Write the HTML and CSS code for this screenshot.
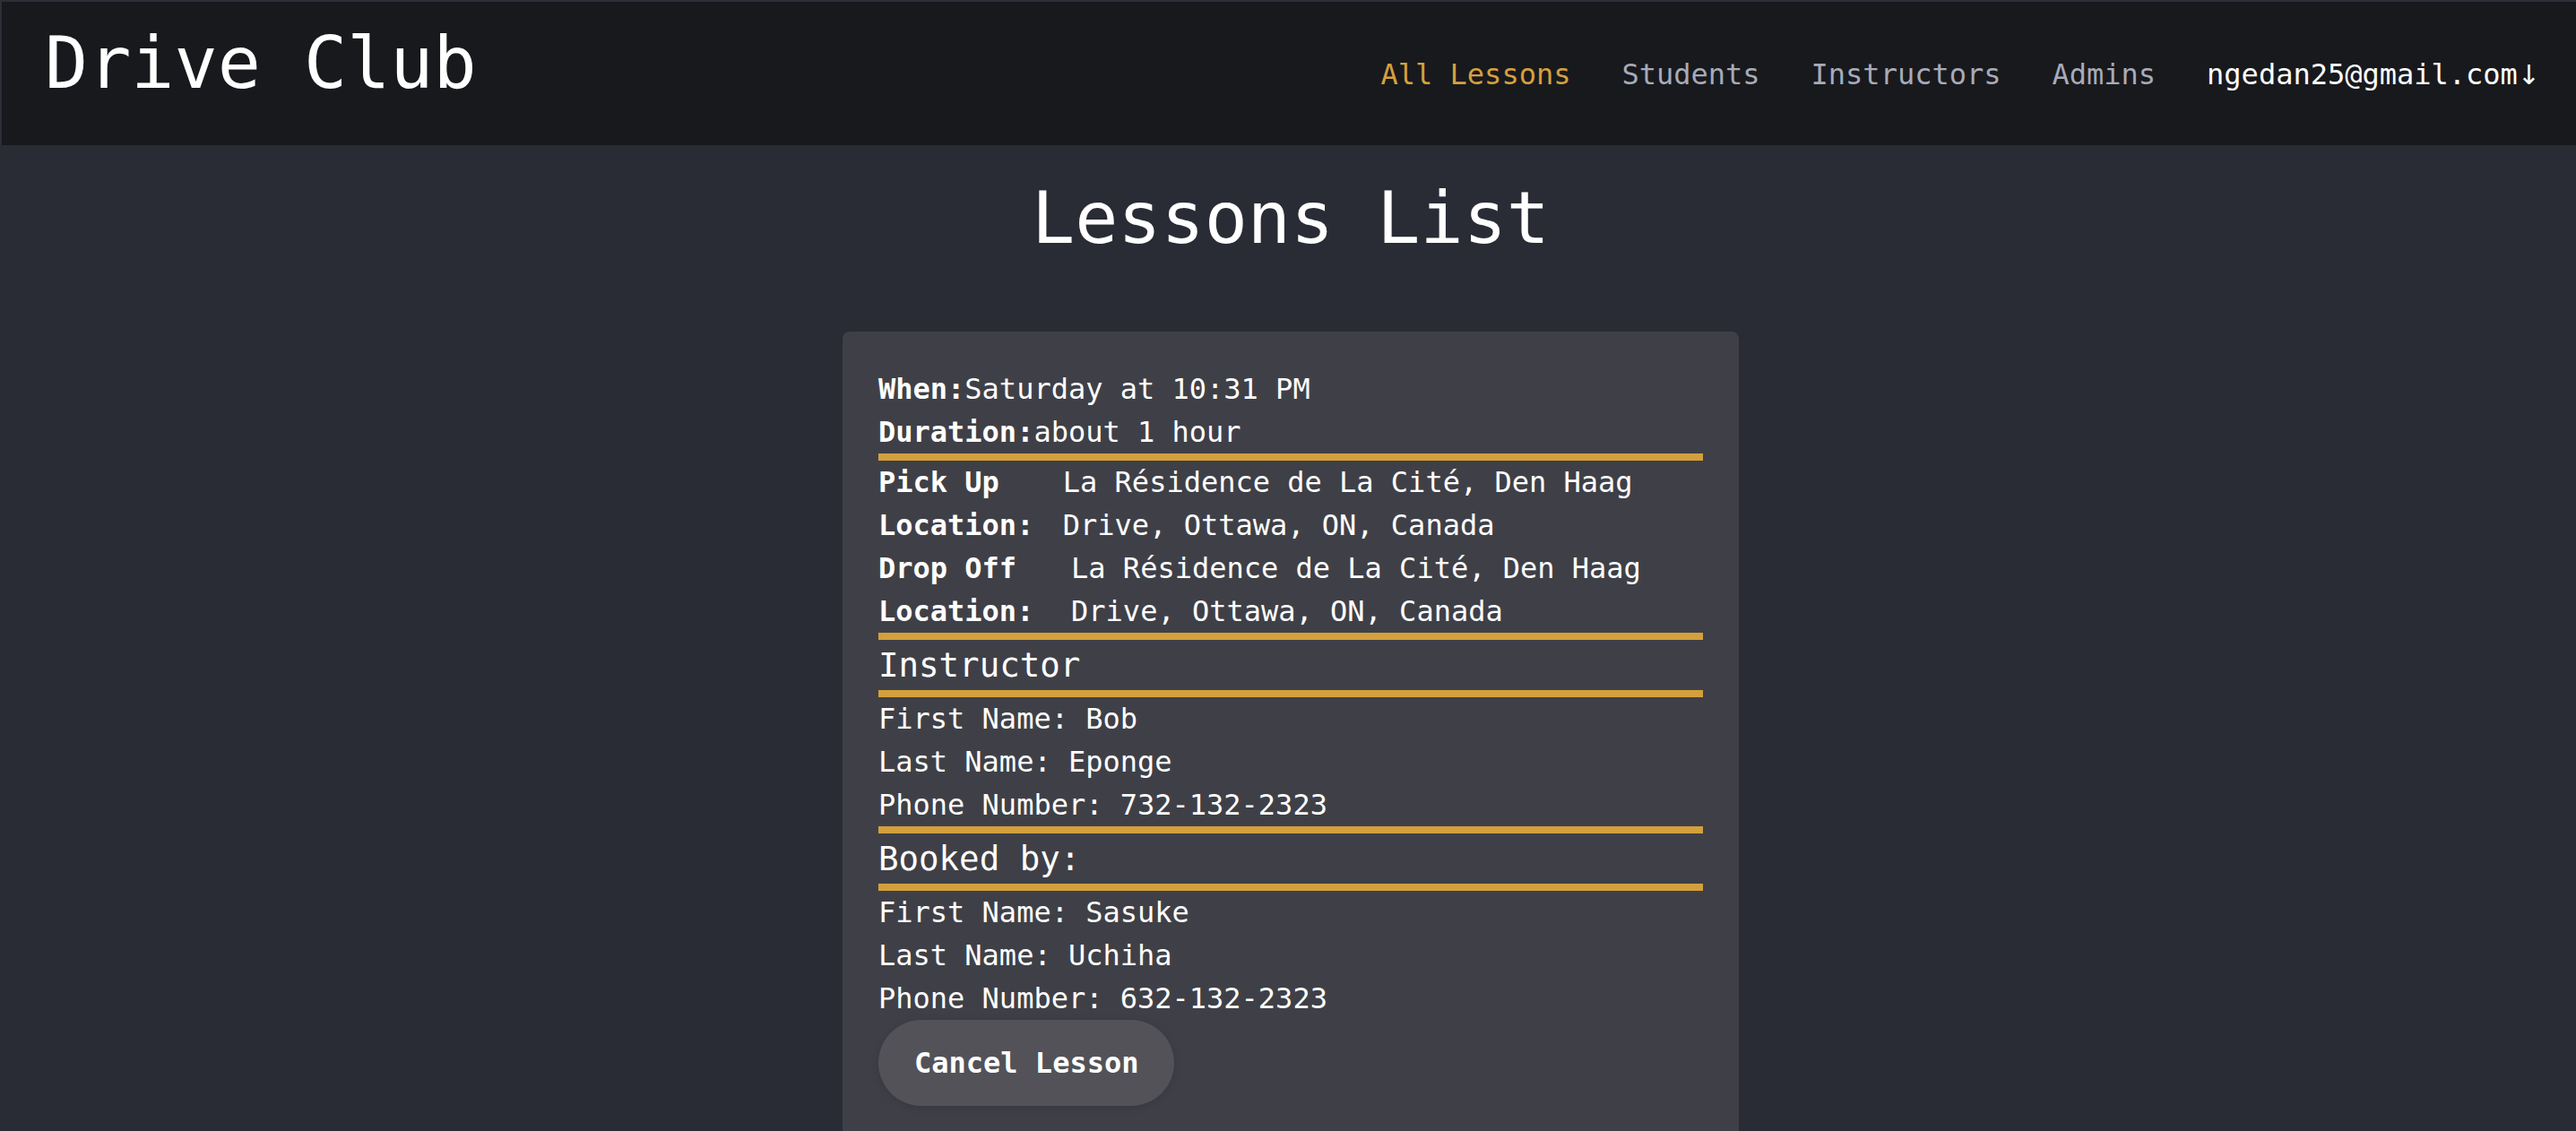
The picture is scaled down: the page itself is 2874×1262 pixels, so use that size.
FILE: index.html
```html
<!DOCTYPE html>
<html lang="en">
<head>
<meta charset="utf-8">
<title>Drive Club</title>
<link rel="stylesheet" href="styles.css">
</head>
<body>
<header class="topbar">
  <h1 class="brand">Drive Club</h1>
  <nav class="nav">
    <a class="nav-link active" href="#">All Lessons</a>
    <a class="nav-link" href="#">Students</a>
    <a class="nav-link" href="#">Instructors</a>
    <a class="nav-link" href="#">Admins</a>
    <a class="nav-link user" href="#">ngedan25@gmail.com<span class="caret">↓</span></a>
  </nav>
</header>
<main class="main">
  <h1 class="title">Lessons List</h1>
  <section class="card">
    <p class="line"><b>When:</b>Saturday at 10:31 PM</p>
    <p class="line"><b>Duration:</b>about 1 hour</p>
    <div class="bar"></div>
    <div class="loc"><b class="loc-label">Pick Up Location:</b><span class="loc-value">La Résidence de La Cité, Den Haag Drive, Ottawa, ON, Canada</span></div>
    <div class="loc"><b class="loc-label">Drop Off Location:</b><span class="loc-value">La Résidence de La Cité, Den Haag Drive, Ottawa, ON, Canada</span></div>
    <div class="bar"></div>
    <h3 class="sec">Instructor</h3>
    <div class="bar"></div>
    <p class="line">First Name: Bob</p>
    <p class="line">Last Name: Eponge</p>
    <p class="line">Phone Number: 732-132-2323</p>
    <div class="bar"></div>
    <h3 class="sec">Booked by:</h3>
    <div class="bar"></div>
    <p class="line">First Name: Sasuke</p>
    <p class="line">Last Name: Uchiha</p>
    <p class="line">Phone Number: 632-132-2323</p>
    <button class="cancel" type="button">Cancel Lesson</button>
  </section>
</main>
</body>
</html>
```
FILE: styles.css
```css
html, body {
  margin: 0;
  padding: 0;
}
body {
  background: #292c35;
  color: #ffffff;
  font-family: "DejaVu Sans Mono", "Liberation Mono", monospace;
  font-size: 32px;
  line-height: 48px;
}
.topbar {
  display: flex;
  align-items: flex-start;
  justify-content: space-between;
  box-sizing: border-box;
  height: 162px;
  padding: 21px 40px 0 48px;
  background: #18191d;
  border-top: 2px solid #2c2f38;
  border-left: 2px solid #2c2f38;
}
.brand {
  margin: 0;
  font-size: 80px;
  line-height: 96px;
  font-weight: normal;
}
.nav {
  display: flex;
  align-items: baseline;
  gap: 57px;
  margin-top: 36px;
}
.nav-link {
  color: #a7abb8;
  text-decoration: none;
  font-size: 32px;
}
.nav-link.active {
  color: #d4a13e;
}
.nav-link.user {
  color: #ffffff;
}
.caret {
  font-family: "DejaVu Sans", sans-serif;
  font-size: 30px;
}
.main {
  padding-left: 6px;
}
.title {
  margin: 34px 0 78px;
  text-align: center;
  font-size: 80px;
  line-height: 96px;
  font-weight: normal;
}
.card {
  box-sizing: border-box;
  width: 1000px;
  margin: 0 auto;
  padding: 40px;
  background: #3f4047;
  border-radius: 8px;
}
.line {
  margin: 0;
}
.bar {
  height: 8px;
  background: #d4a03d;
}
.loc {
  display: flex;
}
.loc-label {
  font-weight: bold;
}
.sec {
  margin: 0;
  font-size: 37.44px;
  line-height: 56px;
  font-weight: normal;
}
.cancel {
  display: block;
  height: 96px;
  padding: 0 40px;
  border: none;
  border-radius: 48px;
  background: #525258;
  color: #ffffff;
  font-family: "DejaVu Sans Mono", "Liberation Mono", monospace;
  font-size: 32px;
  font-weight: bold;
  box-shadow: 0 2px 10px rgba(0, 0, 0, 0.12);
}
```
